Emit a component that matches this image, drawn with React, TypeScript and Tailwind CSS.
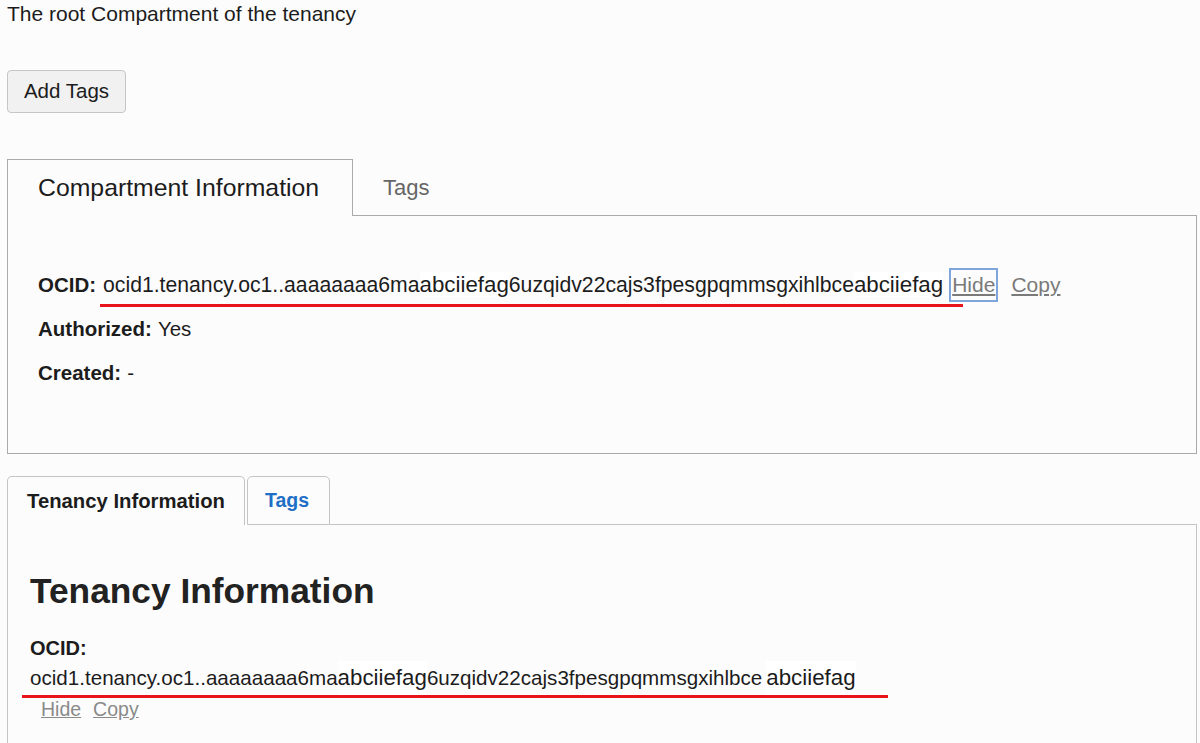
import React from "react";

const font = "font-['Liberation_Sans','Helvetica',Arial,sans-serif]";

function Underline({ className }: { className: string }) {
  // red annotation line drawn over the OCID
  return <span className={`absolute h-[3px] bg-[#e8131b] ${className}`} />;
}

function CompartmentPanel() {
  return (
    <section className="mt-[46px]">
      {/* Tabs */}
      <div className="flex items-end h-[57px]">
        <div className="h-[57px] w-[346px] flex items-center pl-[30px] border border-b-0 border-[#aaaaaa] text-[24.8px] text-[#1c1c1c]">
          Compartment Information
        </div>
        <div className="flex-1 h-full flex items-center pl-[30px] border-b border-[#aaaaaa] text-[22px] text-[#666666]">
          Tags
        </div>
      </div>

      {/* Body */}
      <div className="h-[238px] border border-t-0 border-[#aaaaaa] pt-[57px] pl-[30px] flex flex-col gap-[20px]">
        <div className="relative flex items-center h-[24px] whitespace-nowrap">
          <span className="font-bold text-[20.5px]">OCID:</span>
          <span className="ml-[7px] text-[21.2px]">
            ocid1.tenancy.oc1..aaaaaaaa6ma<span className="text-[22.3px] bg-white">abciiefag</span>6uzqidv22cajs3fpesgpqmmsgxihlbce<span className="text-[22.3px] bg-white">abciiefag</span>
          </span>
          <span className="ml-[6px] border-2 border-[#7ea6dc] px-[1px] leading-[30px] text-[21px] text-[#7a7a7a] underline">
            Hide
          </span>
          <span className="ml-[13px] text-[21px] text-[#7a7a7a] underline">Copy</span>
          <Underline className="left-[62px] top-[31px] w-[863px]" />
        </div>
        <div className="flex items-center h-[24px]">
          <span className="font-bold text-[20.5px]">Authorized:</span>
          <span className="ml-[6px] text-[20.5px]">Yes</span>
        </div>
        <div className="flex items-center h-[24px]">
          <span className="font-bold text-[20.5px]">Created:</span>
          <span className="ml-[6px] text-[20.5px]">-</span>
        </div>
      </div>
    </section>
  );
}

function TenancyPanel() {
  return (
    <section className="mt-[22px]">
      {/* Tabs */}
      <div className="flex items-end h-[49px]">
        <div className="h-[49px] w-[238px] flex items-center pl-[19px] border border-b-0 border-[#c4c4c4] rounded-t-[5px] font-bold text-[20.3px] text-[#1c1c1c]">
          Tenancy Information
        </div>
        <div className="ml-[2px] h-[49px] w-[83px] flex items-center pl-[17px] border border-[#c4c4c4] rounded-t-[5px] font-bold text-[19.5px] text-[#1f6fc6]">
          Tags
        </div>
        <div className="flex-1 border-b border-[#c4c4c4]" />
      </div>

      {/* Body */}
      <div className="h-[230px] border-l border-r border-[#c4c4c4] pt-[46px] pl-[22px]">
        <h2 className="font-bold text-[35.3px] leading-[40px] text-[#222222]">Tenancy Information</h2>
        <div className="mt-[25px] font-bold text-[20px] leading-[24px]">OCID:</div>
        <div className="relative mt-[6px] h-[24px] flex items-center whitespace-nowrap text-[20.6px]">
          ocid1.tenancy.oc1..aaaaaaaa6ma<span className="text-[22.3px] bg-white">abciiefag</span>6uzqidv22cajs3fpesgpqmmsgxihlbce <span className="ml-[4px] text-[22.3px] bg-white">abciiefag</span>
          <Underline className="-left-[8px] top-[29px] w-[866px]" />
        </div>
        <div className="mt-[7px] pl-[11px] flex gap-[12px] text-[19.5px] leading-[24px] text-[#8a8a8a]">
          <span className="underline">Hide</span>
          <span className="underline">Copy</span>
        </div>
      </div>
    </section>
  );
}

export default function App() {
  return (
    <div className={`${font} h-screen overflow-hidden bg-[#fcfcfc] text-[#1c1c1c] pl-[7px] pr-[3px]`}>
      <p className="pt-[2px] text-[21px] leading-[24px]">The root Compartment of the tenancy</p>

      <button className="mt-[44px] h-[43px] w-[119px] rounded-[4px] border border-[#c6c6c6] bg-[#f1f1f1] text-[20.5px] text-[#1c1c1c]">
        Add Tags
      </button>

      <CompartmentPanel />
      <TenancyPanel />
    </div>
  );
}
